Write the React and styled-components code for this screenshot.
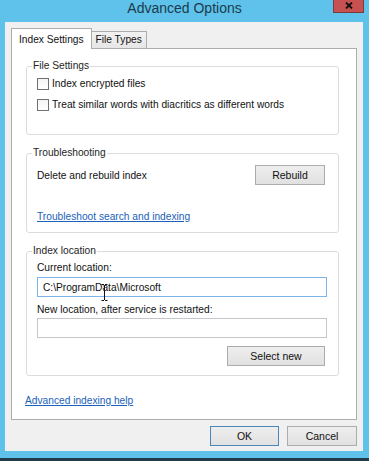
import styled, { createGlobalStyle } from "styled-components";

const GlobalStyle = createGlobalStyle`
html, body {
  margin: 0;
  padding: 0;
  background: #5ec2ea;
}
* {
  box-sizing: border-box;
}
`

const Window = styled.div`
width: 369px;
height: 461px;
background: #5ec2ea;
border-bottom: 3px solid #22394a;
display: flex;
flex-direction: column;
font-family: "Liberation Sans", Arial, sans-serif;
font-size: 10.2px;
color: #111;
`

const TitleBar = styled.div`
height: 22px;
display: grid;
grid-template-columns: 1fr auto 1fr;
align-items: start;
`

const Title = styled.div`
grid-column: 2;
font-size: 14px;
line-height: 16px;
color: #1b3b4d;
`

const CloseButton = styled.div`
grid-column: 3;
justify-self: end;
margin-right: 5px;
width: 31px;
height: 13px;
background: #c75050;
border: 1px solid #7b3b3b;
border-top: none;
display: flex;
align-items: center;
justify-content: center;
padding-bottom: 1px;
`

const Client = styled.div`
margin: 0 6px 7px 5px;
flex: 1;
background: #f0f0f0;
padding: 6px 6px 5px 6px;
display: flex;
flex-direction: column;
`

const TabStrip = styled.div`
height: 20px;
display: flex;
align-items: flex-end;
position: relative;
z-index: 1;
`

const Tab = styled.div`
height: ${p => (p.$active ? "21px" : "17px")};
margin-bottom: ${p => (p.$active ? "-1px" : "0")};
padding: ${p => (p.$active ? "0 7px 0 7px" : "0 4px 0 4px")};
background: ${p => (p.$active ? "#fff" : "linear-gradient(#f2f2f2, #e6e6e6)")};
border: 1px solid #adadad;
border-bottom: none;
border-left: ${p => (p.$active ? "1px solid #adadad" : "none")};
display: flex;
align-items: ${p => (p.$active ? "flex-start" : "center")};
padding-top: ${p => (p.$active ? "4px" : "0")};
line-height: 14px;
`

const Panel = styled.div`
height: 372px;
background: #fff;
border: 1px solid #adadad;
padding: 10px 17px 11px 14px;
display: flex;
flex-direction: column;
`

const Group = styled.fieldset`
margin: 0;
margin-top: ${p => p.$gap || 0}px;
padding: 0;
border: 1px solid #dcdcdc;
border-radius: 3px;
min-width: 0;
`

const Legend = styled.legend`
margin-left: 5px;
padding: 0 1px;
line-height: 14px;
color: #1e1e1e;
`

const GroupBody = styled.div`
padding: ${p => p.$pad};
display: flex;
flex-direction: column;
`

const CheckRow = styled.label`
height: 21px;
display: flex;
align-items: center;
gap: 3px;
`

const Box = styled.span`
width: 12px;
height: 12px;
border: 1px solid #707070;
background: linear-gradient(#f4f4f4, #fff);
`

const ActionRow = styled.div`
margin-top: 5px;
height: 20px;
display: flex;
align-items: center;
justify-content: space-between;
padding-right: 1px;
`

const Button = styled.button`
width: ${p => p.$w}px;
height: 20px;
padding: 0;
border: 1px solid ${p => (p.$default ? "#4a86b8" : "#acacac")};
background: linear-gradient(#eeeeee, #e1e1e1);
font-family: inherit;
font-size: 10.5px;
color: #111;
`

const Link = styled.a`
display: block;
align-self: flex-start;
margin-top: ${p => p.$top}px;
margin-left: ${p => p.$left || 0}px;
line-height: 14px;
color: #1a62b8;
text-decoration: underline;
`

const Label = styled.div`
margin-top: ${p => p.$top}px;
line-height: 14px;
`

const Field = styled.div`
position: relative;
margin-top: ${p => p.$top}px;
width: 290px;
height: 20px;
border: 1px solid ${p => (p.$focus ? "#7eb4ea" : "#c4c6cc")};
background: #fff;
padding-left: 5px;
display: flex;
align-items: center;
color: #111;
`

const Cursor = styled.svg`
position: absolute;
left: 63px;
top: 6px;
`

const RightRow = styled.div`
margin-top: ${p => p.$top}px;
display: flex;
justify-content: flex-end;
gap: 8px;
padding-right: ${p => p.$pr || 0}px;
`

export default function App() {
  return (
    <>
      <GlobalStyle />
      <Window>
        <TitleBar>
          <Title>Advanced Options</Title>
          <CloseButton>
            <svg width="8" height="7" viewBox="0 0 8 7">
              <path d="M1 0.5l6 6M7 0.5l-6 6" stroke="#111" strokeWidth="1.8" fill="none" />
            </svg>
          </CloseButton>
        </TitleBar>
        <Client>
          <TabStrip>
            <Tab $active>Index Settings</Tab>
            <Tab>File Types</Tab>
          </TabStrip>
          <Panel>
            <Group>
              <Legend>File Settings</Legend>
              <GroupBody $pad="0 12px 19px 10px">
                <CheckRow><Box />Index encrypted files</CheckRow>
                <CheckRow><Box />Treat similar words with diacritics as different words</CheckRow>
              </GroupBody>
            </Group>
            <Group $gap={11}>
              <Legend>Troubleshooting</Legend>
              <GroupBody $pad="0 12px 8px 10px">
                <ActionRow>
                  <span>Delete and rebuild index</span>
                  <Button $w={70}>Rebuild</Button>
                </ActionRow>
                <Link $top={25}>Troubleshoot search and indexing</Link>
              </GroupBody>
            </Group>
            <Group $gap={11}>
              <Legend>Index location</Legend>
              <GroupBody $pad="0 12px 9px 10px">
                <Label $top={3}>Current location:</Label>
                <Field $top={2} $focus>
                  C:\ProgramData\Microsoft
                  <Cursor width="7" height="17" viewBox="0 0 7 17">
                    <path d="M0.5 0.5h2.5M4 0.5h2.5M3.5 1v15M0.5 16.5h2.5M4 16.5h2.5" stroke="#111" strokeWidth="1" fill="none" />
                  </Cursor>
                </Field>
                <Label $top={6}>New location, after service is restarted:</Label>
                <Field $top={1} />
                <RightRow $top={8} $pr={1}>
                  <Button $w={98}>Select new</Button>
                </RightRow>
              </GroupBody>
            </Group>
            <Link $top={18} $left={-1}>Advanced indexing help</Link>
          </Panel>
          <RightRow $top={6}>
            <Button $w={69} $default>OK</Button>
            <Button $w={70}>Cancel</Button>
          </RightRow>
        </Client>
      </Window>
    </>
  );
}
